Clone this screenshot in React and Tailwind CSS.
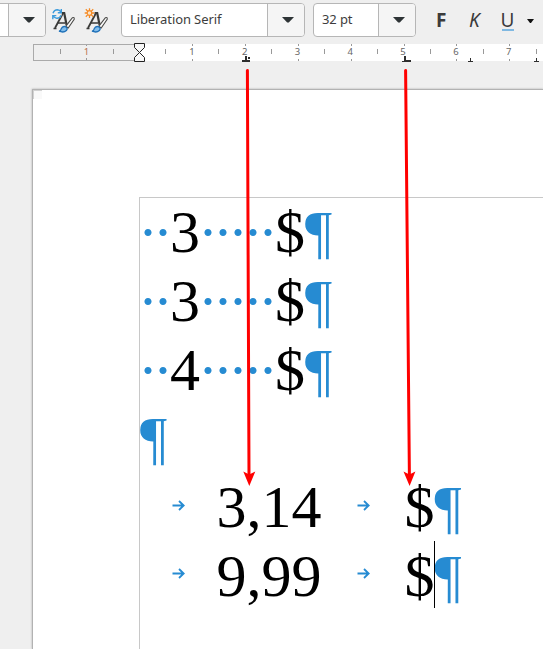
import React from 'react'

const spaceLines = ['3', '3', '4']
const tabLines = ['3,14', '9,99']
const rulerNumbers = [1, 2, 3, 4, 5, 6, 7]

const majorTicks = [192, 245, 298, 351, 404, 456, 509]
const minorTicks = [165, 218, 271, 324, 377, 430, 483, 536]

function ComboBox({ value, className }) {
    return (
        <div className={`flex h-[34px] shrink-0 overflow-hidden rounded-[4px] border border-[#b6b6b6] bg-white ${className}`}>
            <div className="flex flex-1 items-center pl-2 text-[13px] tracking-[-0.1px] whitespace-nowrap text-[#3d3d3d]">{value}</div>
            <div className="flex w-[37px] items-center justify-center border-l border-[#b6b6b6] bg-[#f5f5f5] pl-[3px]">
                <svg width="12" height="6" className="block">
                    <path d="M0 0H12L6.8 5.5H5.2Z" fill="#2e3436" />
                </svg>
            </div>
        </div>
    )
}

// Letter A with a brush, shared by both paragraph style buttons
function StyleGlyph() {
    return (
        <g>
            <path d="M3 20L10.8 5.5" fill="none" stroke="#3a3a38" strokeWidth="1.8" />
            <path d="M9.5 5H12.2L14.6 17" fill="none" stroke="#3a3a38" strokeWidth="2.2" />
            <path d="M1.5 20.5H4.5M5.5 15H13" stroke="#3a3a38" strokeWidth="1.6" />
            <path d="M13.7 18.3L20.4 9.7Q22.6 8.8 22.2 11.3L16.2 20Z" fill="#fafafa" stroke="#4a4a48" strokeWidth="1.1" />
            <path d="M7 23.2Q9 23 9.2 20.8Q10.5 17.9 13.2 18.7Q16.4 20 14.4 22.6Q11.6 25 7 23.2Z" fill="#83beec" stroke="#1e70b8" strokeWidth="1.3" />
        </g>
    )
}

function UpdateStyleIcon() {
    return (
        <svg width="24" height="26" className="block shrink-0 overflow-visible">
            <StyleGlyph />
            <circle cx="5" cy="6" r="4.8" fill="#f0f0f0" />
            <path d="M1 5.2Q2.2 1.8 5.4 1.8Q7.8 1.9 9 4.3M9.3 1V4.7H5.8M9 7.2Q7.8 10.4 4.7 10.2Q2.4 10.1 1.2 8M.8 11.3V7.6H4.3" fill="none" stroke="#3c9bdc" strokeWidth="1.4" />
        </svg>
    )
}

function NewStyleIcon() {
    return (
        <svg width="24" height="26" className="block shrink-0 overflow-visible">
            <StyleGlyph />
            <circle cx="4.5" cy="5" r="4.8" fill="#f0f0f0" />
            <circle cx="4.5" cy="5" r="2.3" fill="#fbe3c7" stroke="#f58a24" strokeWidth="1.2" />
            <path d="M4.5 .2V2.4M4.5 7.6V10M-.3 5H2M7 5H9.3M.8 1.3L2.6 3.1M6.4 6.9L8.2 8.7M8.2 1.3L6.4 3.1M2.6 6.9L.8 8.7" stroke="#f58a24" strokeWidth="1.3" />
        </svg>
    )
}

function Toolbar() {
    return (
        <div className="flex h-[44px] w-[543px] items-start overflow-hidden pt-[3px]">
            <ComboBox value="" className="-ml-2 w-[54px]" />
            <div className="ml-[6px] flex gap-[9px] pt-[5px]">
                <UpdateStyleIcon />
                <NewStyleIcon />
            </div>
            <ComboBox value="Liberation Serif" className="ml-[12px] w-[184px]" />
            <ComboBox value="32 pt" className="ml-[8px] w-[103px]" />
            <div className="ml-[20px] flex h-[34px] items-center text-[19px] leading-none text-[#3b3b3b]">
                <span className="w-[33px] font-bold">F</span>
                <span className="w-[32px] italic">K</span>
                <span className="flex w-[13px] flex-col items-center pt-[2px]">
                    <span className="h-[17px] leading-[17px]">U</span>
                    <span className="h-[2px] w-[12px] bg-[#80b9e2]"></span>
                </span>
                <svg width="8" height="5" className="ml-[13px] mt-[3px] block">
                    <path d="M0 0H7L4 4H3Z" fill="#111" />
                </svg>
            </div>
        </div>
    )
}

function Ruler() {
    return (
        <div className="relative flex h-[17px] w-[543px] pl-[33px] text-[9.5px] leading-[14px] text-[#666]">
            <div className="flex w-[107px] justify-center border border-[#aaa] text-[#b8704e]">1</div>
            <div className="flex flex-1 overflow-hidden bg-white pl-[25.5px] pt-px">
                {rulerNumbers.map((n) => (
                    <span key={n} className="w-[52.8px] shrink-0 text-center">{n}</span>
                ))}
            </div>
            <svg width="543" height="22" className="absolute -top-px left-0" shapeRendering="crispEdges">
                {majorTicks.map((x) => (
                    <path key={x} d={`M${x + 0.5} 1V3M${x + 0.5} 16V18`} stroke="#999" />
                ))}
                {minorTicks.map((x) => (
                    <path key={x} d={`M${x + 0.5} 6V11`} stroke="#999" />
                ))}
                <path d="M60.5 6V11M113.5 6V11M86.5 2V3M86.5 15V17" stroke="#999" />
                {/* Indent markers */}
                <path d="M134.5 .5H144.5V4.5L139.5 9.5L134.5 4.5ZM134.5 18.5H144.5V14.5L139.5 9.5L134.5 14.5Z" fill="#f7f7f7" stroke="#222" shapeRendering="auto" />
                {/* Tab stops: decimal, left and the default ones */}
                <path d="M242 17H250V19H242ZM245 13H247V17H245ZM248 14H250V16H248Z" fill="#2e2e2e" />
                <path d="M402 18H405V19H402ZM404 13H406V19H404ZM405 17H411V19H405Z" fill="#2e2e2e" />
                <path d="M468 18H473V19H468ZM470 15H471V18H470ZM534 18H539V19H534ZM536 15H537V18H536Z" fill="#2e2e2e" />
            </svg>
        </div>
    )
}

function Pilcrow() {
    return <span className="text-[#268bd2]">¶</span>
}

// Formatting marks for plain spaces, each as wide as a space
function Spaces({ children }) {
    return <span className="-ml-[2px] mr-[2px] tracking-[-5px] text-[#268bd2]">{children}</span>
}

function Tab({ className }) {
    return (
        <span className={`flex shrink-0 justify-center ${className}`}>
            <svg width="13" height="11" className="block">
                <path d="M.5 5.5H12M7 1L11.7 5.5L7 10" fill="none" stroke="#268bd2" strokeWidth="1.8" />
            </svg>
        </span>
    )
}

function Document() {
    return (
        <div className="relative ml-[32px] h-[560px] w-[511px] border-l border-t border-[#b2b2b2] bg-white pl-[106px] pt-[107px] shadow-[0_0_2px_#aaa]">
            <span className="absolute left-0 top-0 h-[9px] w-[9px] border-l border-t border-[#d2d2d2] bg-[#f9f9f9]"></span>
            <div className="h-[452px] border-l border-t border-[#c8c8c8] font-['Liberation_Serif',serif] text-[60px] leading-[69px] whitespace-pre text-black">
                {spaceLines.map((digit, i) => (
                    <div key={i} className={i === 2 ? 'h-[68px]' : 'h-[69px]'}>
                        <Spaces>··</Spaces>{digit}<Spaces>·····</Spaces>$<Pilcrow />
                    </div>
                ))}
                <div className="h-[69px]"><Pilcrow /></div>
                {tabLines.map((num, i) => (
                    <div key={num} className="flex h-[69px]">
                        <Tab className={i === 0 ? 'w-[76.5px] pt-[27px]' : 'w-[76.5px] pt-[26px]'} />
                        <span>{num}</span>
                        <Tab className={i === 0 ? 'w-[83px] pt-[27px]' : 'w-[83px] pt-[26px]'} />
                        <span>$</span>
                        <span className="relative">
                            <Pilcrow />
                            {i === 1 && <span className="absolute -left-px -top-px h-[67px] w-px bg-black"></span>}
                        </span>
                    </div>
                ))}
            </div>
        </div>
    )
}

// Red pointers from the ruler tab stops down to the aligned text
function Pointers() {
    return (
        <svg width="543" height="649" className="pointer-events-none absolute left-0 top-0">
            <path d="M247.4 70.5L249 476M405.6 70.5L409.4 476" stroke="#f00" strokeWidth="3" strokeLinecap="round" />
            <path d="M249.3 486L243.3 471.5L249.2 474.5L255.3 471.5ZM409.6 486L403.5 471.5L409.4 474.5L415.4 471.5Z" fill="#f00" />
        </svg>
    )
}

export default function App() {
    return (
        <div className="relative h-[649px] w-[543px] overflow-hidden bg-[#efefef] font-['Noto_Sans','Open_Sans',sans-serif]">
            <Toolbar />
            <Ruler />
            <div className="h-[28px]"></div>
            <Document />
            <Pointers />
        </div>
    )
}
